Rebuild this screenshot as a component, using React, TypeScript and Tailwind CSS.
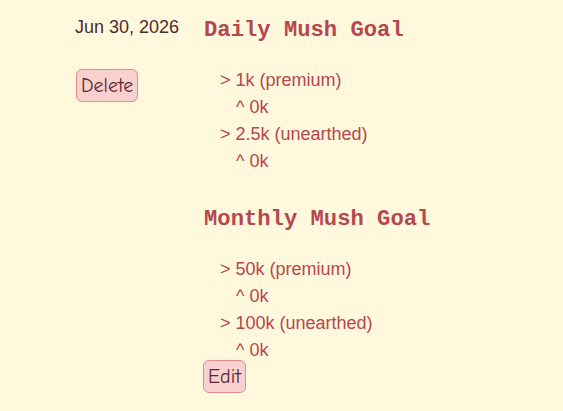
const goals = [
  {
    title: "Daily Mush Goal",
    rows: [
      { target: "1k (premium)", progress: "0k" },
      { target: "2.5k (unearthed)", progress: "0k" },
    ],
  },
  {
    title: "Monthly Mush Goal",
    rows: [
      { target: "50k (premium)", progress: "0k" },
      { target: "100k (unearthed)", progress: "0k" },
    ],
  },
];

const btn =
  "rounded-md border border-[#e58a8e] bg-[#f8d0cd] px-[4px] text-[20px] leading-[31px] text-[#5b2633] font-['Comic_Sans_MS','Comic_Neue',cursive]";

export default function App() {
  return (
    <div className="min-h-[411px] w-full bg-[#fff8dc] font-['Liberation_Sans',Arial,sans-serif]">
      <div className="flex pl-[75px] pt-[15px]">
        <div className="flex w-[129px] flex-col items-start">
          <p className="text-[18px] leading-[24px] text-[#4e2a2e]">Jun 30, 2026</p>
          <button className={`${btn} mt-[30px] ml-px`}>Delete</button>
        </div>

        <div className="flex flex-col items-start">
          {goals.map((g, i) => (
            <section key={g.title} className={i > 0 ? "mt-[29px]" : ""}>
              <h2 className="font-['Liberation_Mono','Courier_New',monospace] text-[22.2px] font-bold leading-[32px] text-[#b5474e]">
                {g.title}
              </h2>
              <ul className="mt-[20px] pl-4 text-[18px] leading-[27px] text-[#b5474e]">
                {g.rows.map((r) => (
                  <li key={r.target}>
                    <div>&gt; {r.target}</div>
                    <div className="pl-4">^ {r.progress}</div>
                  </li>
                ))}
              </ul>
            </section>
          ))}
          <button className={`${btn} -mt-[4px] -ml-px`}>Edit</button>
        </div>
      </div>
    </div>
  );
}
